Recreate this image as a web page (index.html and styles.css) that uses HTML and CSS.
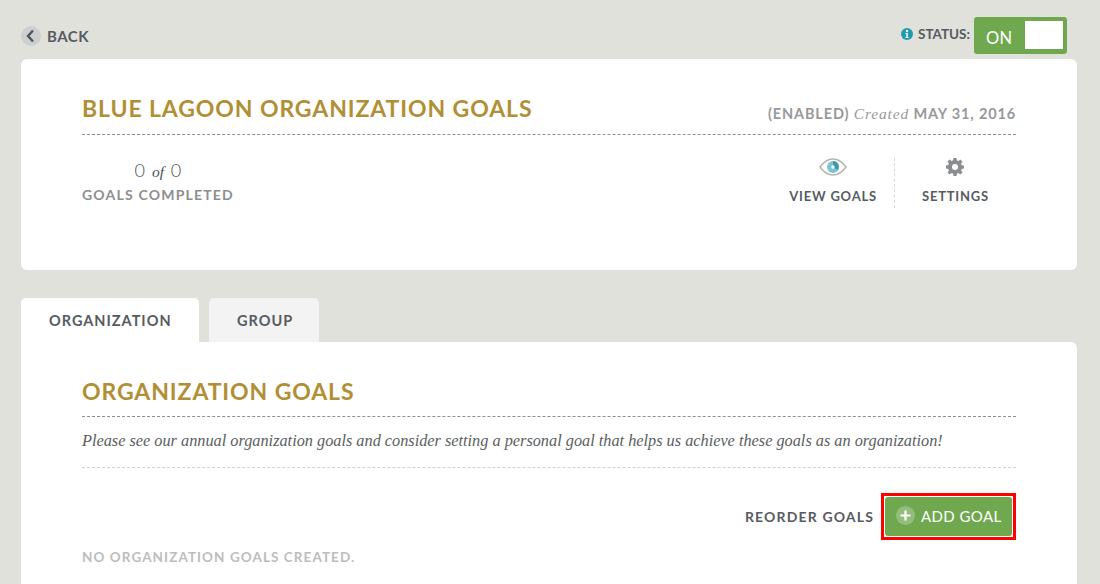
FILE: index.html
```html
<!DOCTYPE html>
<html lang="en">
<head>
    <meta charset="UTF-8">
    <title>Blue Lagoon Organization Goals</title>
    <link rel="stylesheet" href="styles.css">
</head>
<body>
    <!-- Top bar -->
    <div class="top-bar">
        <a class="back" href="#">
            <span class="back-icon">
                <svg width="20" height="20" viewBox="0 0 20 20"><path d="M12 4.500 7 10l5 5.500" fill="none" stroke="#4f555b" stroke-width="2.400"/></svg>
            </span>
            BACK
        </a>
        <div class="status">
            <svg class="info-icon" width="12" height="12" viewBox="0 0 12 12">
                <circle cx="6" cy="6" r="6" fill="#1f9bb0"/>
                <circle cx="6" cy="3" r="1.200" fill="#fff"/>
                <path d="M4.600 5h2.200v4h.8v1H4.400V9h.9V6h-.7z" fill="#fff"/>
            </svg>
            <span class="status-label">STATUS:</span>
            <div class="toggle">
                <span class="toggle-text">ON</span>
                <span class="toggle-knob"></span>
            </div>
        </div>
    </div>

    <!-- Summary card -->
    <section class="card summary">
        <div class="title-row">
            <h1>BLUE LAGOON ORGANIZATION GOALS</h1>
            <div class="created">(ENABLED) <em>Created</em> MAY 31, 2016</div>
        </div>
        <div class="stats-row">
            <div class="stats">
                <div class="count">0 <em>of</em> 0</div>
                <div class="stats-label">GOALS COMPLETED</div>
            </div>
            <div class="actions">
                <a class="action action-view" href="#">
                    <svg width="28" height="18" viewBox="0 0 28 18">
                        <path d="M1 9C5 3.500 9.500 1 14 1s9 2.500 13 8c-4 5.500-8.500 8-13 8S5 14.500 1 9z" fill="#fff" stroke="#b5b5b0" stroke-width="1.500"/>
                        <circle cx="14" cy="9" r="6" fill="#7cc6d3"/>
                        <path d="M14 3a6 6 0 0 1 5 9.300L14 9z" fill="#3f97aa"/>
                        <circle cx="14" cy="9" r="1.700" fill="#fff"/>
                    </svg>
                    <span>VIEW GOALS</span>
                </a>
                <a class="action action-settings" href="#">
                    <svg width="18" height="18" viewBox="0 0 18 18">
                        <path d="M7.500 0h3l.4 2.400 1.500.6 2-1.400 2.100 2.100-1.400 2 .6 1.500 2.300.3v3l-2.300.4-.6 1.500 1.400 2-2.100 2.100-2-1.400-1.500.6-.4 2.300h-3l-.4-2.300-1.500-.6-2 1.400-2.100-2.100 1.400-2-.6-1.500L0 10.500v-3l2.300-.4.600-1.500-1.400-2 2.100-2.100 2 1.400 1.500-.6z" fill="#8b8d8f"/>
                        <circle cx="9" cy="9" r="3" fill="#fff"/>
                    </svg>
                    <span>SETTINGS</span>
                </a>
            </div>
        </div>
    </section>

    <!-- Tabs -->
    <div class="tabs">
        <a class="tab active" href="#">ORGANIZATION</a>
        <a class="tab" href="#">GROUP</a>
    </div>

    <!-- Goals panel -->
    <section class="card goals">
        <h2>ORGANIZATION GOALS</h2>
        <p class="intro">Please see our annual organization goals and consider setting a personal goal that helps us achieve these goals as an organization!</p>
        <div class="goal-actions">
            <a class="reorder" href="#">REORDER GOALS</a>
            <div class="highlight">
                <a class="add-goal" href="#">
                    <span class="plus">
                        <svg width="19" height="19" viewBox="0 0 19 19"><path d="M9.500 4.500v10M4.500 9.500h10" stroke="#fff" stroke-width="2.200"/></svg>
                    </span>
                    ADD GOAL
                </a>
            </div>
        </div>
        <p class="empty">NO ORGANIZATION GOALS CREATED.</p>
    </section>
</body>
</html>
```

FILE: styles.css
```css
* {
    margin: 0;
    padding: 0;
    box-sizing: border-box;
}

html, body {
    height: 584px;
    overflow: hidden;
}

body {
    background: #e0e1db;
    color: #565b61;
    font-family: 'Lato', sans-serif;
    padding: 0 23px 0 21px;
}

a {
    color: inherit;
    text-decoration: none;
}

/* Top bar */
.top-bar {
    height: 59px;
    display: flex;
    justify-content: space-between;
    padding-top: 16px;
}

.back {
    display: flex;
    align-items: center;
    gap: 6px;
    height: 38px;
    font-size: 15px;
    font-weight: 700;
    letter-spacing: 0.5px;
    align-self: flex-start;
    margin-top: 1px;
}

.back-icon {
    width: 20px;
    height: 20px;
    border-radius: 50%;
    background: #cdced0;
    display: block;
}

.back-icon svg {
    display: block;
}

.status {
    display: flex;
    align-items: flex-start;
    margin-right: 10px;
}

.info-icon {
    margin: 12px 5px 0 0;
}

.status-label {
    font-size: 13.500px;
    font-weight: 700;
    line-height: 18px;
    margin: 9px 4px 0 0;
}

.toggle {
    width: 93px;
    height: 37px;
    margin-top: 1px;
    background: #6fa84f;
    border-radius: 3px;
    display: flex;
    justify-content: space-between;
    align-items: center;
    padding: 4px 4px 5px 12px;
    color: #fff;
}

.toggle-text {
    font-size: 16.500px;
    font-weight: 400;
    letter-spacing: 0.3px;
    padding-top: 5px;
}

.toggle-knob {
    width: 38px;
    height: 28px;
    background: #fff;
}

/* Cards */
.card {
    background: #fff;
    padding: 0 61px;
}

.summary {
    height: 211px;
    border-radius: 6px;
}

.title-row {
    height: 76px;
    display: flex;
    justify-content: space-between;
    align-items: flex-end;
    padding-bottom: 11px;
    border-bottom: 1px dashed #8f8f8f;
}

h1, h2 {
    color: #b08f36;
    font-size: 23px;
    font-weight: 700;
    letter-spacing: 0.9px;
    line-height: 30px;
}

.created {
    color: #97999b;
    font-size: 14.500px;
    font-weight: 700;
    letter-spacing: 0.850px;
    line-height: 18px;
}

.created em, .count em {
    font-family: 'Liberation Serif', serif;
    font-style: italic;
    font-weight: 400;
    font-size: 15.500px;
}

.stats-row {
    display: flex;
    justify-content: space-between;
    padding-top: 23px;
}

.stats {
    text-align: center;
    color: #8c8e90;
}

.count {
    color: #4a4f54;
    font-size: 18px;
    font-weight: 300;
    line-height: 24px;
    word-spacing: 2px;
}

.stats-label {
    font-size: 14px;
    font-weight: 700;
    letter-spacing: 1.200px;
    line-height: 20px;
    margin-top: 1px;
}

.actions {
    display: flex;
    margin-right: 27px;
}

.action {
    display: flex;
    flex-direction: column;
    align-items: center;
    justify-content: space-between;
    height: 50px;
    padding-bottom: 4px;
    font-size: 13px;
    font-weight: 700;
    letter-spacing: 0.800px;
}

.action-view {
    padding-right: 17px;
    border-right: 1px dashed #d8d8d8;
}

.action-settings {
    padding-left: 27px;
}

/* Tabs */
.tabs {
    display: flex;
    gap: 10px;
    margin-top: 28px;
}

.tab {
    width: 110px;
    height: 44px;
    line-height: 46px;
    background: #f3f3f3;
    border-radius: 5px 5px 0 0;
    font-size: 14.500px;
    font-weight: 700;
    letter-spacing: 1px;
    padding-left: 28px;
}

.tab.active {
    width: 178px;
    background: #fff;
}

/* Goals panel */
.goals {
    height: 260px;
    border-radius: 0 6px 0 0;
}

.goals h2 {
    padding-top: 34px;
    padding-bottom: 10px;
    line-height: 30px;
    border-bottom: 1px dashed #8f8f8f;
}

.intro {
    font-family: 'Liberation Serif', serif;
    font-style: italic;
    font-size: 16.300px;
    color: #5a5e62;
    line-height: 20px;
    padding: 14px 0 16px;
    border-bottom: 1px dashed #d2d2d2;
}

.goal-actions {
    display: flex;
    justify-content: flex-end;
    align-items: center;
    gap: 7px;
    margin-top: 25px;
}

.reorder {
    font-size: 14px;
    font-weight: 700;
    letter-spacing: 1.150px;
}

.highlight {
    border: 3px solid #ff0000;
    padding: 1px;
    width: 135px;
    height: 47px;
}

.add-goal {
    display: flex;
    align-items: center;
    gap: 6px;
    height: 39px;
    padding-bottom: 2px;
    background: #6fa84f;
    border-radius: 3px;
    color: #fff;
    font-size: 15px;
    font-weight: 400;
    letter-spacing: 0.400px;
    padding-left: 11px;
}

.plus {
    width: 19px;
    height: 19px;
    border-radius: 50%;
    background: #93bd7b;
}

.plus svg {
    display: block;
}

.empty {
    color: #bdbdbd;
    font-size: 13.500px;
    font-weight: 700;
    letter-spacing: 1.070px;
    margin-top: 9px;
}
```
